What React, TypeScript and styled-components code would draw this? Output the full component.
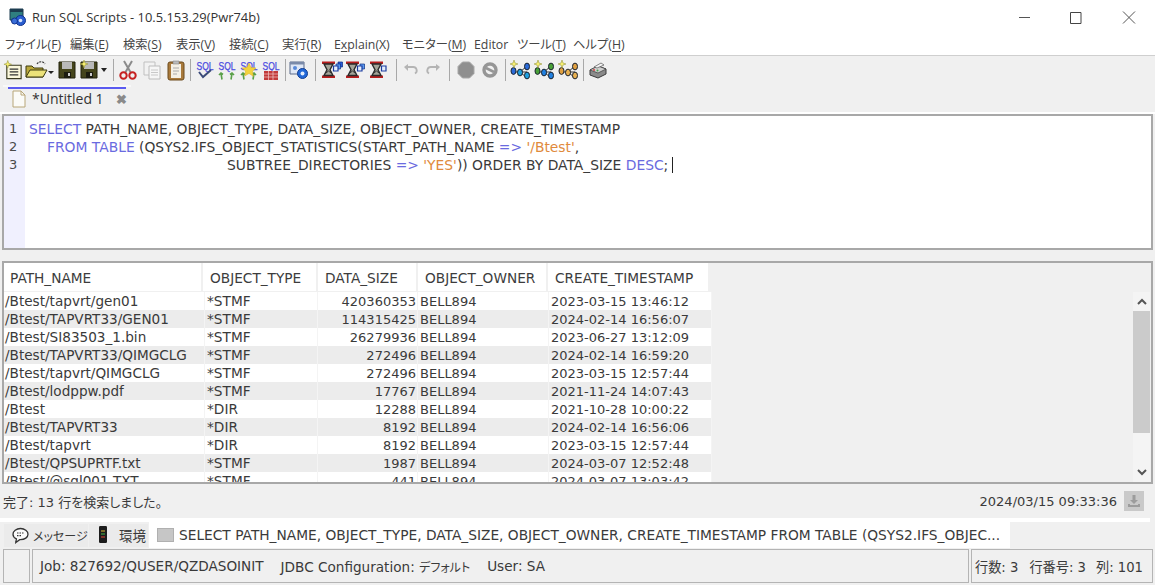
import { FC, ReactNode } from 'react';
import styled, { createGlobalStyle } from 'styled-components';

const UI_FONT = `'DejaVu Sans', 'Noto Sans CJK JP', sans-serif`;
const TITLE_FONT = `'Open Sans', 'Noto Sans', 'Noto Sans CJK JP', sans-serif`;

const GlobalStyle = createGlobalStyle`
  html, body {
    margin: 0;
    padding: 0;
    background: #f0f0f0;
    overflow: hidden;
  }
`;

type Row = [string, string, string, string, string];

const rows: Row[] = [
  ['/Btest/tapvrt/gen01', '*STMF', '420360353', 'BELL894', '2023-03-15 13:46:12'],
  ['/Btest/TAPVRT33/GEN01', '*STMF', '114315425', 'BELL894', '2024-02-14 16:56:07'],
  ['/Btest/SI83503_1.bin', '*STMF', '26279936', 'BELL894', '2023-06-27 13:12:09'],
  ['/Btest/TAPVRT33/QIMGCLG', '*STMF', '272496', 'BELL894', '2024-02-14 16:59:20'],
  ['/Btest/tapvrt/QIMGCLG', '*STMF', '272496', 'BELL894', '2023-03-15 12:57:44'],
  ['/Btest/lodppw.pdf', '*STMF', '17767', 'BELL894', '2021-11-24 14:07:43'],
  ['/Btest', '*DIR', '12288', 'BELL894', '2021-10-28 10:00:22'],
  ['/Btest/TAPVRT33', '*DIR', '8192', 'BELL894', '2024-02-14 16:56:06'],
  ['/Btest/tapvrt', '*DIR', '8192', 'BELL894', '2023-03-15 12:57:44'],
  ['/Btest/QPSUPRTF.txt', '*STMF', '1987', 'BELL894', '2024-03-07 12:52:48'],
  ['/Btest/@sql001.TXT', '*STMF', '441', 'BELL894', '2024-03-07 13:03:42'],
];

const menus: { label: string; key?: string; width: number }[] = [
  { label: 'ファイル', key: 'F', width: 65 },
  { label: '編集', key: 'E', width: 53 },
  { label: '検索', key: 'S', width: 53 },
  { label: '表示', key: 'V', width: 53 },
  { label: '接続', key: 'C', width: 53 },
  { label: '実行', key: 'R', width: 52 },
  { label: 'Explain', key: 'X', width: 68 },
  { label: 'モニター', key: 'M', width: 72 },
  { label: 'Editor', width: 43 },
  { label: 'ツール', key: 'T', width: 56 },
  { label: 'ヘルプ', key: 'H', width: 60 },
];

const columns = ['PATH_NAME', 'OBJECT_TYPE', 'DATA_SIZE', 'OBJECT_OWNER', 'CREATE_TIMESTAMP'];

const Star = ({ x = 5, y = 5 }: { x?: number; y?: number }) => (
  <path
    d={`M${x} ${y - 4}l1 3 3 1-3 1-1 3-1-3-3-1 3-1z`}
    fill="#f6ee70"
    stroke="#8a8a30"
    strokeWidth=".5"
  />
);

const NewIcon = () => (
  <svg width="22" height="22" viewBox="0 0 22 22">
    <path d="M4 6h15v14H4z" fill="#fbf8dc" stroke="#3a3a20" strokeWidth="1.2" />
    <path d="M7 10h9M7 13h9M7 16h9" stroke="#333" strokeWidth="1.3" />
    <Star x={5} y={5} />
  </svg>
);

const OpenIcon = () => (
  <svg width="30" height="22" viewBox="0 0 30 22">
    <path d="M2 18V7h6l2 2h9v9z" fill="#b9a83c" stroke="#3c3a10" />
    <path d="M2 18l4-7h17l-4 7z" fill="#ece27a" stroke="#3c3a10" />
    <path d="M13 5c2-3 6-3 8 0" fill="none" stroke="#333" strokeWidth="1.2" strokeDasharray="2 1" />
    <path d="M24 12h6l-3 3z" fill="#222" />
  </svg>
);

const FloppyIcon = ({ star }: { star?: boolean }) => (
  <svg width="20" height="22" viewBox="0 0 20 22">
    <path d="M2 3h16v16H2z" fill="#45451c" stroke="#22220c" />
    <path d="M5 3h10v7H5z" fill="#b9b9b9" />
    <path d="M7 13h7v6H7z" fill="#1c1c10" />
    <path d="M11 14h2v3h-2z" fill="#ccc" />
    {star && <Star x={5} y={5} />}
  </svg>
);

const Arrow = () => (
  <svg width="8" height="5" viewBox="0 0 8 5">
    <path d="M1 0h6L4 4z" fill="#222" />
  </svg>
);

const CutIcon = () => (
  <svg width="20" height="22" viewBox="0 0 20 22">
    <path d="M6 2l7 12M14 2L7 14" stroke="#8a8a8a" strokeWidth="2" />
    <circle cx="5.5" cy="16.5" r="3.2" fill="none" stroke="#c62020" strokeWidth="2" />
    <circle cx="14.5" cy="16.5" r="3.2" fill="none" stroke="#c62020" strokeWidth="2" />
  </svg>
);

const CopyIcon = () => (
  <svg width="20" height="22" viewBox="0 0 20 22">
    <path d="M2 3h11v13H2z" fill="#f2f2f2" stroke="#c0c0c0" />
    <path d="M7 7h11v13H7z" fill="#f6f6f6" stroke="#bcbcbc" />
    <path d="M9 11h7M9 13.5h7M9 16h7" stroke="#c8c8c8" />
  </svg>
);

const PasteIcon = () => (
  <svg width="20" height="22" viewBox="0 0 20 22">
    <rect x="2" y="3" width="16" height="18" rx="2" fill="#a97a3c" stroke="#6c4a1c" />
    <path d="M5 5h10v14H5z" fill="#f4f0e6" />
    <path d="M7 9h6M7 12h6M7 15h4" stroke="#aaa" />
    <path d="M7 2h6v3H7z" fill="#bcbcbc" stroke="#777" strokeWidth=".5" />
  </svg>
);

const SqlSvg = styled.svg`
  overflow: visible;
`;

const SqlIcon: FC<{ children: ReactNode }> = ({ children }) => (
  <SqlSvg width="22" height="22" viewBox="0 0 22 22">
    <text
      x="2.500"
      y="11"
      fontFamily="'Liberation Sans', sans-serif"
      fontSize="10.500"
      textLength="17"
      lengthAdjust="spacingAndGlyphs"
      stroke="#4a4ae0"
      strokeWidth=".25"
      fill="#4a4ae0"
    >
      SQL
    </text>
    {children}
  </SqlSvg>
);

const GreenArrows = () => (
  <path d="M6 20.500l-1-6M3 16l2-2 2 1.500M15 20.500l1-6M14 15.500l2-1.500 2 2" stroke="#5aa048" strokeWidth="1.600" fill="none" />
);

const BigStar = () => (
  <path d="M11 4l2 4.500 5 .5-3.600 3.300 1 5L11 14.500 6.600 17l1-5L4 9l5-.5z" fill="#f2d23c" stroke="#d8b020" strokeWidth=".5" />
);

const Grid = () => (
  <>
    <path d="M4 12h14v9H4z" fill="#c23a3a" />
    <path d="M4 15h14M4 18h14M8.500 12v9M13 12v9" stroke="#f0c8c8" strokeWidth=".7" />
  </>
);

const SettingsIcon = () => (
  <svg width="22" height="22" viewBox="0 0 22 22">
    <path d="M2 3h14v12H2z" fill="#dfe7f5" stroke="#5a6a8a" />
    <path d="M2 3h14v2.500H2z" fill="#7a8aa8" />
    <circle cx="14.500" cy="14.500" r="5" fill="#2268d8" stroke="#103c90" />
    <circle cx="14.500" cy="14.500" r="2" fill="#e4eefc" />
    <circle cx="7" cy="9" r="2" fill="#5a8ad8" />
  </svg>
);

const HourglassIcon = ({ stacked }: { stacked: number }) => (
  <svg width="22" height="20" viewBox="0 0 22 20">
    <path d="M1 1.500h13V4H1zM1 15.500h13V18H1z" fill="#b81e1e" />
    <path d="M3 4h9L9 9.700l3 5.800H3l3-5.800z" fill="#a4a498" stroke="#2a2a2a" strokeWidth="1.400" />
    <path d="M5 13l2.500-2 2.500 2" fill="none" stroke="#333" />
    {stacked > 2 && <path d="M17 2h4.500v5H17z" fill="#2a5ad8" stroke="#0c2c80" strokeWidth=".7" />}
    {stacked > 1 && <path d="M15 4h4.500v5H15z" fill="#5a9af0" stroke="#0c2c80" strokeWidth=".7" />}
    <path d="M12.500 6H17v5h-4.500z" fill="#e4eefc" stroke="#1c3ca0" strokeWidth="1.200" />
  </svg>
);

const UndoIcon = ({ flip }: { flip?: boolean }) => (
  <svg width="16" height="14" viewBox="0 0 16 14" style={flip ? { transform: 'scaleX(-1)' } : undefined}>
    <path d="M3.500 4H10a3.500 3.500 0 0 1 2 6.500" fill="none" stroke="#b4b4b4" strokeWidth="1.800" />
    <path d="M1 4l4-3v7z" fill="#b4b4b4" />
  </svg>
);

const StopIcon = () => (
  <svg width="18" height="18" viewBox="0 0 18 18">
    <path d="M5.500 1h7L17 5.500v7L12.500 17h-7L1 12.500v-7z" fill="#8f8f8f" stroke="#a8a8a8" />
  </svg>
);

const CancelIcon = () => (
  <svg width="18" height="18" viewBox="0 0 18 18">
    <circle cx="9" cy="9" r="6" fill="#f0f0f0" stroke="#969696" strokeWidth="3.400" />
    <path d="M5 7l8 4" stroke="#969696" strokeWidth="2.600" />
  </svg>
);

const NodesIcon = ({ a, b }: { a: string; b: string }) => (
  <svg width="22" height="22" viewBox="0 0 22 22">
    <path d="M4 13h14M11 13l7-6M11 13l7 6" stroke="#333" strokeWidth="1" />
    <ellipse cx="4.500" cy="12" rx="2.500" ry="3.400" fill={a} stroke="#1c2430" strokeWidth="1" />
    <ellipse cx="11" cy="13.500" rx="2.500" ry="3.400" fill={b} stroke="#1c2430" strokeWidth="1" />
    <ellipse cx="18" cy="7.500" rx="2.500" ry="3.400" fill={a} stroke="#1c2430" strokeWidth="1" />
    <ellipse cx="18" cy="16.500" rx="2.500" ry="3.400" fill={b} stroke="#1c2430" strokeWidth="1" />
    <Star x={5} y={5} />
  </svg>
);

const PrinterIcon = () => (
  <svg width="22" height="20" viewBox="0 0 20 20">
    <path d="M2 10l8-4 8 3v5l-8 4-8-3z" fill="#8a8a8a" stroke="#3a3a3a" />
    <path d="M2 10l8 3 8-4-8-3z" fill="#cfcfcf" stroke="#3a3a3a" strokeWidth=".7" />
    <path d="M6 7l7-4 3 2-7 3z" fill="#f4f4f4" stroke="#555" strokeWidth=".7" />
    <circle cx="6" cy="10" r="1" fill="#d04040" />
    <circle cx="9.500" cy="10.500" r="1" fill="#40a050" />
  </svg>
);

const AppIcon = () => (
  <svg width="19" height="19" viewBox="0 0 19 19">
    <path d="M1 1h13v11H1z" fill="#2f7f80" stroke="#1c3c50" />
    <path d="M1 1h13v3H1z" fill="#1c3c50" />
    <circle cx="11.500" cy="12.500" r="5" fill="#2a5ed0" stroke="#10308c" />
    <circle cx="11.500" cy="12.500" r="1.800" fill="#d8e4fa" />
    <circle cx="5.500" cy="13" r="3" fill="#3a6ed8" stroke="#10308c" />
  </svg>
);

const PageIcon = () => (
  <svg width="14" height="18" viewBox="0 0 14 18">
    <path d="M1 1h8l4 4v12H1z" fill="#fbfbf8" stroke="#b8a678" />
    <path d="M9 1v4h4" fill="none" stroke="#b8a678" />
  </svg>
);

const BubbleIcon = () => (
  <svg width="17" height="17" viewBox="0 0 17 17">
    <path d="M8.500 1.500C4.300 1.500 1 4 1 7.200c0 2.100 1.400 3.800 3.400 4.700L3.800 15.500l3.900-2.800h.8c4.200 0 7.500-2.400 7.500-5.500s-3.300-5.700-7.500-5.700z" fill="#fafafa" stroke="#333" strokeWidth="1.300" />
    <path d="M5 6h7M5 8.700h5" stroke="#333" strokeWidth="1.200" strokeDasharray="1.500 1" />
  </svg>
);

const PhoneIcon = () => (
  <svg width="12" height="20" viewBox="0 0 12 20">
    <rect x="2" y="1" width="8" height="17" rx="1.200" fill="#1c1c1c" />
    <path d="M4 6h4" stroke="#c0a030" strokeWidth="1.200" />
    <path d="M4 9h4" stroke="#40a040" strokeWidth="1.200" />
    <path d="M4 12h4" stroke="#c04030" strokeWidth="1.200" />
  </svg>
);

const DownloadIcon = () => (
  <svg width="14" height="14" viewBox="0 0 14 14">
    <path d="M5.500 1h3v5h2.500L7 10 3 6h2.500z" fill="#9c9c9c" />
    <path d="M1 10v3h12v-3h-2v1H3v-1z" fill="#9c9c9c" />
  </svg>
);

const Window = styled.div`
  width: 1155px;
  height: 585px;
  display: flex;
  flex-direction: column;
  box-sizing: border-box;
  background: #f0f0f0;
  font-family: ${UI_FONT};
  font-size: 13px;
  color: #3c3c3c;
  overflow: hidden;
`;

const TitleBar = styled.div`
  height: 33px;
  flex: none;
  display: flex;
  align-items: center;
  background: #fff;
  padding-left: 9px;
  padding-top: 1px;
  box-sizing: border-box;
`;

const Title = styled.span`
  margin-left: 4px;
  flex: 1;
  font-family: ${TITLE_FONT};
  font-size: 12.9px;
  color: #333;
  white-space: nowrap;
`;

const WindowButton = styled.svg`
  width: 52px;
  height: 14px;
  flex: none;
`;

const MenuBar = styled.div`
  height: 23px;
  flex: none;
  display: flex;
  align-items: center;
  background: #fff;
  border-bottom: 1px solid #cfcfcf;
  padding-left: 5px;
  box-sizing: border-box;
  font-family: ${TITLE_FONT};
  font-size: 12.3px;
  font-feature-settings: 'palt';
  color: #444;
`;

const MenuItem = styled.span<{ $width: number }>`
  width: ${p => p.$width}px;
  flex: none;
  white-space: nowrap;

  u {
    text-underline-offset: 2px;
  }
`;

const Toolbar = styled.div`
  height: 28px;
  flex: none;
  display: flex;
  align-items: center;
  padding-left: 3px;
`;

const ToolSlot = styled.div<{ $width: number }>`
  width: ${p => p.$width}px;
  height: 24px;
  flex: none;
  display: flex;
  align-items: center;
  justify-content: center;
  gap: 1px;
`;

const ToolSeparator = styled.div<{ $width: number }>`
  width: ${p => p.$width}px;
  height: 22px;
  flex: none;
  display: flex;
  justify-content: center;

  &::after {
    content: '';
    width: 1px;
    background: #a8a8a8;
  }
`;

const TabStrip = styled.div`
  height: 30px;
  flex: none;
  display: flex;
  align-items: flex-end;
  padding-left: 3px;
  border-bottom: 2px solid #fff;
  box-sizing: border-box;
`;

const EditorTab = styled.div`
  width: 128px;
  height: 27px;
  box-sizing: border-box;
  display: flex;
  align-items: center;
  padding: 0 4px 2px 9px;
  background: #f0f0f0;
  border-top: 2px solid #f8f8f8;
  position: relative;
  font-family: ${TITLE_FONT};
  font-size: 14px;
  color: #333;

  &::before {
    content: '';
    position: absolute;
    left: 5px;
    right: 5px;
    top: 0;
    height: 2px;
    background: #5a5af0;
  }
`;

const TabLabel = styled.span`
  margin-left: 6px;
  flex: 1;
  white-space: nowrap;
`;

const TabClose = styled.span`
  font-size: 13px;
  font-weight: 700;
  color: #8a8a8a;
`;

const EditorBox = styled.div`
  height: 136px;
  flex: none;
  margin: 0 2px 0 2px;
  display: flex;
  background: #fff;
  border: 2px solid #a8a8a8;
  box-sizing: border-box;
  line-height: 18px;
  color: #3a3a3a;
`;

const Gutter = styled.div`
  width: 21px;
  flex: none;
  background: #f0f0fe;
  padding: 4px 0 0 5px;
  box-sizing: border-box;
  color: #4a4a4a;
`;

const Code = styled.div`
  padding: 4px 0 0 4px;
  flex: 1;
  white-space: pre;
  font-size: 13.85px;
`;

const CodeLine = styled.div<{ $indent?: number }>`
  padding-left: ${p => p.$indent ?? 0}px;
  height: 18px;
`;

const Keyword = styled.span`
  color: #6a6ae0;
`;

const Str = styled.span`
  color: #e08a3c;
`;

const Caret = styled.span`
  display: inline-block;
  width: 1px;
  height: 16px;
  background: #222;
  vertical-align: -3px;
  margin-left: 4px;
`;

const ResultBox = styled.div`
  height: 223px;
  flex: none;
  margin: 11px 2px 0 2px;
  border: 2px solid #a8a8a8;
  box-sizing: border-box;
  background: #f0f0f0;
  display: flex;
  position: relative;
  overflow: hidden;
`;

const ResultTable = styled.div`
  flex: 1;
  display: flex;
  flex-direction: column;
`;

const TableRow = styled.div<{ $striped?: boolean }>`
  display: grid;
  grid-template-columns: 201px 113px 100px 131px 163px;
  width: 708px;
  height: 18px;
  flex: none;
  background: ${p => (p.$striped ? '#ececec' : '#fff')};
  line-height: 19px;
  color: #3a3a3a;
`;

const HeaderRow = styled.div`
  display: grid;
  grid-template-columns: 199px 115px 100px 130px 162px;
  width: 706px;
  height: 28px;
  flex: none;
  background: #fff;
  margin-bottom: 1px;
`;

const HeaderCell = styled.div`
  padding-left: 7px;
  line-height: 30px;
  font-size: 13.7px;
  border-right: 2px solid #f0f0f0;
  box-sizing: border-box;
  white-space: nowrap;
  overflow: hidden;

  &:first-child {
    padding-left: 6px;
  }
`;

const Cell = styled.div<{ $right?: boolean; $size?: number }>`
  padding: ${p => (p.$right ? '0 1px 0 0' : '0 0 0 2px')};
  text-align: ${p => (p.$right ? 'right' : 'left')};
  font-size: ${p => p.$size ?? 13}px;
  white-space: nowrap;
  overflow: hidden;
  border-right: 1px solid #f4f4f4;
  box-sizing: border-box;

  &:first-child {
    padding-left: 1px;
  }
`;

const ScrollBar = styled.div`
  position: absolute;
  right: 1px;
  top: 29px;
  bottom: 0;
  width: 17px;
  background: #f4f4f4;
  display: flex;
  flex-direction: column;
`;

const ScrollButton = styled.div`
  height: 19px;
  flex: none;
  display: flex;
  align-items: center;
  justify-content: center;
`;

const ScrollThumb = styled.div`
  height: 122px;
  flex: none;
  background: #cbcbcb;
`;

const ScrollSpace = styled.div`
  flex: 1;
`;

const MessageRow = styled.div`
  height: 34px;
  flex: none;
  display: flex;
  align-items: center;
  padding: 0 11px 0 3px;
  font-feature-settings: 'palt';
  color: #3a3a3a;
`;

const MessageText = styled.span`
  flex: 1;
`;

const Timestamp = styled.span`
  margin-right: 7px;
`;

const DownloadButton = styled.div`
  width: 20px;
  height: 20px;
  background: #c9c9c9;
  display: flex;
  align-items: center;
  justify-content: center;
`;

const BottomTabs = styled.div`
  height: 30px;
  flex: none;
  display: flex;
  align-items: flex-end;
  padding-left: 4px;
  border-top: 4px solid #fff;
  margin-right: 5px;
  box-sizing: border-box;
`;

const BottomTab = styled.div<{ $width: number; $gap: number; $size: number; $active?: boolean }>`
  width: ${p => p.$width}px;
  height: ${p => (p.$active ? 26 : 23)}px;
  flex: none;
  display: flex;
  align-items: center;
  box-sizing: border-box;
  margin-right: 1px;
  align-self: ${p => (p.$active ? 'flex-start' : 'center')};
  background: ${p => (p.$active ? '#fff' : '#ebebeb')};
  padding-left: 8px;
  gap: ${p => p.$gap}px;
  font-size: ${p => p.$size}px;
  font-feature-settings: 'palt';
  color: #3a3a3a;
  white-space: nowrap;
`;

const TabSwatch = styled.span`
  width: 17px;
  height: 14px;
  background: #c6c6c6;
  border: 1px solid #b0b0b0;
  box-sizing: border-box;
  flex: none;
`;

const StatusBar = styled.div`
  height: 34px;
  flex: none;
  display: flex;
  gap: 2px;
  margin: 1px 2px 0 3px;
  color: #3a3a3a;
`;

const StatusCell = styled.div<{ $width?: number; $inset: number; $size?: number }>`
  ${p => (p.$width ? `width: ${p.$width}px; flex: none;` : 'flex: 1;')}
  border: 1px solid #b4b4b4;
  box-sizing: border-box;
  display: flex;
  align-items: center;
  padding-left: ${p => p.$inset}px;
  font-size: ${p => p.$size ?? 13.6}px;
  white-space: nowrap;
  font-feature-settings: 'palt';
`;

const StatusItem = styled.span<{ $gap: number }>`
  margin-right: ${p => p.$gap}px;
`;

const StatusValue = styled.span`
  font-size: 12px;
`;

const App: FC = () => (
  <>
    <GlobalStyle />
    <Window>
      <TitleBar>
        <AppIcon />
        <Title>Run SQL Scripts - 10.5.153.29(Pwr74b)</Title>
        <WindowButton viewBox="0 0 52 14">
          <path d="M20 7.500h11" stroke="#555" strokeWidth="1" />
        </WindowButton>
        <WindowButton viewBox="0 0 52 14">
          <path d="M19.500 2.500h10.500v11H19.500z" fill="none" stroke="#444" strokeWidth="1" />
        </WindowButton>
        <WindowButton viewBox="0 0 52 14">
          <path d="M20 1.500l12 12M32 1.500l-12 12" stroke="#555" strokeWidth="1" />
        </WindowButton>
      </TitleBar>
      <MenuBar>
        {menus.map(m => (
          <MenuItem key={m.label} $width={m.width}>
            {m.label === 'Editor' ? (
              <>
                E<u>d</u>itor
              </>
            ) : m.label === 'Explain' ? (
              <>
                E<u>x</u>plain(X)
              </>
            ) : (
              <>
                {m.label}(<u>{m.key}</u>)
              </>
            )}
          </MenuItem>
        ))}
      </MenuBar>
      <Toolbar>
        <ToolSlot $width={21}><NewIcon /></ToolSlot>
        <ToolSlot $width={30}><OpenIcon /></ToolSlot>
        <ToolSlot $width={25}><FloppyIcon /></ToolSlot>
        <ToolSlot $width={29}><FloppyIcon star /><Arrow /></ToolSlot>
        <ToolSeparator $width={10} />
        <ToolSlot $width={20}><CutIcon /></ToolSlot>
        <ToolSlot $width={28}><CopyIcon /></ToolSlot>
        <ToolSlot $width={20}><PasteIcon /></ToolSlot>
        <ToolSeparator $width={8} />
        <ToolSlot $width={22}>
          <SqlIcon><path d="M5 13l4 5 8-7" fill="none" stroke="#3a4a78" strokeWidth="2" /></SqlIcon>
        </ToolSlot>
        <ToolSlot $width={22}><SqlIcon><GreenArrows /></SqlIcon></ToolSlot>
        <ToolSlot $width={22}><SqlIcon><GreenArrows /><BigStar /></SqlIcon></ToolSlot>
        <ToolSlot $width={22}><SqlIcon><Grid /></SqlIcon></ToolSlot>
        <ToolSeparator $width={6} />
        <ToolSlot $width={22}><SettingsIcon /></ToolSlot>
        <ToolSeparator $width={10} />
        <ToolSlot $width={24}><HourglassIcon stacked={3} /></ToolSlot>
        <ToolSlot $width={24}><HourglassIcon stacked={2} /></ToolSlot>
        <ToolSlot $width={24}><HourglassIcon stacked={1} /></ToolSlot>
        <ToolSeparator $width={8} />
        <ToolSlot $width={22}><UndoIcon /></ToolSlot>
        <ToolSlot $width={22}><UndoIcon flip /></ToolSlot>
        <ToolSeparator $width={10} />
        <ToolSlot $width={24}><StopIcon /></ToolSlot>
        <ToolSlot $width={24}><CancelIcon /></ToolSlot>
        <ToolSeparator $width={6} />
        <ToolSlot $width={24}><NodesIcon a="#2a6ad8" b="#20a0e0" /></ToolSlot>
        <ToolSlot $width={24}><NodesIcon a="#48a038" b="#2080e0" /></ToolSlot>
        <ToolSlot $width={24}><NodesIcon a="#e0a040" b="#e8b050" /></ToolSlot>
        <ToolSeparator $width={6} />
        <ToolSlot $width={24}><PrinterIcon /></ToolSlot>
      </Toolbar>
      <TabStrip>
        <EditorTab>
          <PageIcon />
          <TabLabel>*Untitled 1</TabLabel>
          <TabClose>✖</TabClose>
        </EditorTab>
      </TabStrip>
      <EditorBox>
        <Gutter>
          <div>1</div>
          <div>2</div>
          <div>3</div>
        </Gutter>
        <Code>
          <CodeLine>
            <Keyword>SELECT</Keyword> PATH_NAME, OBJECT_TYPE, DATA_SIZE, OBJECT_OWNER, CREATE_TIMESTAMP
          </CodeLine>
          <CodeLine $indent={18}>
            <Keyword>FROM TABLE</Keyword> (QSYS2.IFS_OBJECT_STATISTICS(START_PATH_NAME <Keyword>=&gt;</Keyword>{' '}
            <Str>'/Btest'</Str>,
          </CodeLine>
          <CodeLine $indent={198}>
            SUBTREE_DIRECTORIES <Keyword>=&gt;</Keyword> <Str>'YES'</Str>)) ORDER BY DATA_SIZE <Keyword>DESC</Keyword>;
            <Caret />
          </CodeLine>
        </Code>
      </EditorBox>
      <ResultBox>
        <ResultTable>
          <HeaderRow>
            {columns.map(c => (
              <HeaderCell key={c}>{c}</HeaderCell>
            ))}
          </HeaderRow>
          {rows.map((r, i) => (
            <TableRow key={r[0]} $striped={i % 2 === 1}>
              <Cell $size={13.6}>{r[0]}</Cell>
              <Cell $size={13.7}>{r[1]}</Cell>
              <Cell $right>{r[2]}</Cell>
              <Cell>{r[3]}</Cell>
              <Cell>{r[4]}</Cell>
            </TableRow>
          ))}
        </ResultTable>
        <ScrollBar>
          <ScrollButton>
            <svg width="10" height="7" viewBox="0 0 10 7">
              <path d="M1 6l4-4 4 4" fill="none" stroke="#555" strokeWidth="2" />
            </svg>
          </ScrollButton>
          <ScrollThumb />
          <ScrollSpace />
          <ScrollButton>
            <svg width="10" height="7" viewBox="0 0 10 7">
              <path d="M1 1l4 4 4-4" fill="none" stroke="#555" strokeWidth="2" />
            </svg>
          </ScrollButton>
        </ScrollBar>
      </ResultBox>
      <MessageRow>
        <MessageText>完了: 13 行を検索しました。</MessageText>
        <Timestamp>2024/03/15 09:33:36</Timestamp>
        <DownloadButton>
          <DownloadIcon />
        </DownloadButton>
      </MessageRow>
      <BottomTabs>
        <BottomTab $width={84} $gap={4} $size={12}>
          <BubbleIcon />
          メッセージ
        </BottomTab>
        <BottomTab $width={59} $gap={10} $size={13.5}>
          <PhoneIcon />
          環境
        </BottomTab>
        <BottomTab $width={861} $gap={5} $size={13.75} $active>
          <TabSwatch />
          SELECT PATH_NAME, OBJECT_TYPE, DATA_SIZE, OBJECT_OWNER, CREATE_TIMESTAMP FROM TABLE (QSYS2.IFS_OBJEC...
        </BottomTab>
      </BottomTabs>
      <StatusBar>
        <StatusCell $width={27} $inset={0} />
        <StatusCell $inset={7}>
          <StatusItem $gap={17}>Job: 827692/QUSER/QZDASOINIT</StatusItem>
          <StatusItem $gap={17}>
            JDBC Configuration: <StatusValue>デフォルト</StatusValue>
          </StatusItem>
          <StatusItem $gap={0}>User: SA</StatusItem>
        </StatusCell>
        <StatusCell $width={182} $inset={3} $size={13.2}>
          <StatusItem $gap={11}>行数: 3</StatusItem>
          <StatusItem $gap={10}>行番号: 3</StatusItem>
          <StatusItem $gap={0}>列: 101</StatusItem>
        </StatusCell>
      </StatusBar>
    </Window>
  </>
);

export default App;
